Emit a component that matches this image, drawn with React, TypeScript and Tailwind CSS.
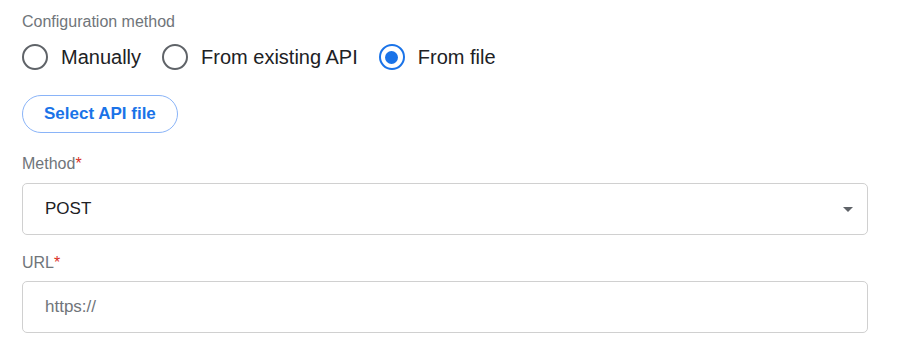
const options = ["Manually", "From existing API", "From file"];

const Radio = ({ label, checked }: { label: string; checked?: boolean }) => (
  <label className="flex items-center gap-[13px]">
    <span
      className={`flex h-[26px] w-[26px] items-center justify-center rounded-full border-[2.5px] ${
        checked ? "border-[#1a73e8]" : "border-[#5f6368]"
      }`}
    >
      {checked && <span className="h-[13px] w-[13px] rounded-full bg-[#1a73e8]" />}
    </span>
    <span className="text-[20px] leading-[26px] text-[#202124]">{label}</span>
  </label>
);

const FieldLabel = ({ children }: { children: string }) => (
  <div className="text-[16px] leading-[20px] text-[#70757a]">
    {children}
    <span className="text-[#d93025]">*</span>
  </div>
);

export default function App() {
  return (
    <div className="h-[350px] w-[902px] bg-white pl-[22px] pr-[34px] pt-[12px] font-['Liberation_Sans',Arial,sans-serif]">
      <div className="text-[16px] leading-[20px] text-[#70757a]">Configuration method</div>

      <div className="mt-[12px] flex items-center gap-[21px]">
        {options.map((o) => (
          <Radio key={o} label={o} checked={o === "From file"} />
        ))}
      </div>

      <button className="mt-[25px] h-[38px] rounded-full border border-[#8ab4f8] px-[21px] text-[17px] font-bold text-[#1a73e8]">
        Select API file
      </button>

      <div className="mt-[21px]">
        <FieldLabel>Method</FieldLabel>
      </div>
      <div className="mt-[9px] flex h-[52px] items-center justify-between rounded-[5px] border border-[#d0d0d0] pl-[22px] pr-[14px]">
        <span className="text-[17px] text-[#202124]">POST</span>
        <svg width="10" height="5" viewBox="0 0 10 5">
          <path d="M0 0h10L5 5z" fill="#5f6368" />
        </svg>
      </div>

      <div className="mt-[18px]">
        <FieldLabel>URL</FieldLabel>
      </div>
      <div className="mt-[8px] flex h-[52px] items-center rounded-[5px] border border-[#d0d0d0] pl-[22px]">
        <span className="text-[17px] text-[#70757a]">https://</span>
      </div>
    </div>
  );
}
